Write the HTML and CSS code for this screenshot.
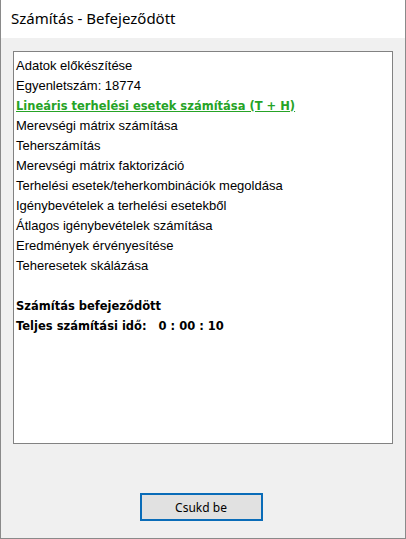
FILE: index.html
```html
<!DOCTYPE html>
<html>

<head>
    <title>Számítás - Befejeződött</title>
    <link rel="stylesheet" href="styles.css">
</head>

<body>
    <div class="window">
        <div class="titlebar">Számítás - Befejeződött</div>
        <div class="content">
            <div class="log">
                <div class="line">Adatok előkészítése</div>
                <div class="line">Egyenletszám: 18774</div>
                <div class="line current">Lineáris terhelési esetek számítása (T + H)</div>
                <div class="line">Merevségi mátrix számítása</div>
                <div class="line">Teherszámítás</div>
                <div class="line">Merevségi mátrix faktorizáció</div>
                <div class="line">Terhelési esetek/teherkombinációk megoldása</div>
                <div class="line">Igénybevételek a terhelési esetekből</div>
                <div class="line">Átlagos igénybevételek számítása</div>
                <div class="line">Eredmények érvényesítése</div>
                <div class="line">Teheresetek skálázása</div>
                <div class="line"></div>
                <div class="line bold">Számítás befejeződött</div>
                <div class="line bold">Teljes számítási idő:&nbsp;&nbsp; 0 : 00 : 10</div>
            </div>
            <div class="button-wrapper">
                <button class="button">Csukd be</button>
            </div>
        </div>
    </div>
</body>

</html>
```

FILE: styles.css
```css
body {
    margin: 0;
    width: 406px;
    height: 539px;
    overflow: hidden;
}

.window {
    display: flex;
    flex-direction: column;
    box-sizing: border-box;
    width: 406px;
    height: 539px;
    border: 1px solid #8a8a8a;
    border-top: none;
    background: #f0f0f0;
}

.titlebar {
    height: 38px;
    box-sizing: border-box;
    padding: 8px 0 0 10px;
    background: #fff;
    font-family: "Noto Sans", sans-serif;
    font-size: 15px;
    color: #000;
}

.content {
    display: flex;
    flex-direction: column;
    flex: 1;
    padding: 13px 12px 0 12px;
}

.log {
    height: 393px;
    box-sizing: border-box;
    border: 1px solid #828282;
    background: #fff;
    padding: 4px 0 0 2px;
    font-family: "Liberation Sans", Arial, sans-serif;
    font-size: 13px;
    color: #000;
}

.line {
    height: 20px;
    line-height: 20px;
    white-space: nowrap;
}

.current,
.bold {
    font-family: "DejaVu Sans", sans-serif;
    font-size: 11.5px;
    font-weight: bold;
}

.current {
    color: #26a326;
    text-decoration: underline;
}

.button-wrapper {
    display: flex;
    justify-content: center;
    padding-top: 49px;
    padding-right: 4px;
}

.button {
    width: 123px;
    height: 28px;
    box-sizing: border-box;
    border: 2px solid #0a6cb8;
    background: #e1e1e1;
    font-family: "Noto Sans", sans-serif;
    font-size: 12px;
    color: #000;
    padding: 0;
}
```
